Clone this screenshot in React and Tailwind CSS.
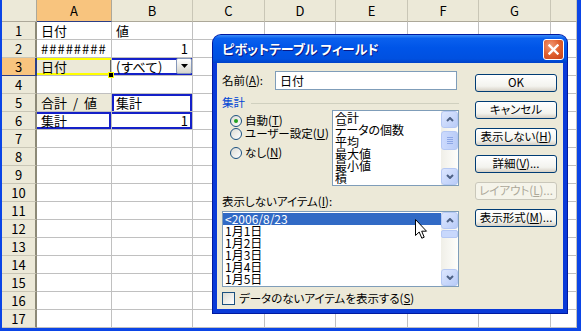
import React from 'react';

const cols = ['A', 'B', 'C', 'D', 'E', 'F', 'G', 'H'];
const rows = Array.from({ length: 17 }, (_, i) => i + 1);

// special cells of the pivot table
const cells = {
  A1: { text: '日付' },
  B1: { text: '値' },
  A2: { text: '########', cls: 'tracking-[1px]' },
  B2: { text: '1', right: true },
  A3: {
    text: '日付',
    cls: 'bg-[#ECE9D8] shadow-[inset_0_2px_0_#ffff00,inset_0_-2px_0_#ffff00,inset_-1px_0_0_#6b6b5e] z-10',
    handle: true,
  },
  B3: { text: '(すべて)', cls: 'shadow-[inset_0_2px_0_#1420c8,inset_0_-2px_0_#1420c8] pr-0', dropdown: true },
  A5: { text: '合計 / 値', cls: 'bg-[#ECE9D8] [word-spacing:3px]' },
  B5: { text: '集計', cls: 'shadow-[inset_2px_2px_0_#1420c8,inset_-2px_0_0_#1420c8]' },
  A6: { text: '集計', cls: 'shadow-[inset_0_2px_0_#1420c8,inset_0_-2px_0_#1420c8,inset_-2px_0_0_#1420c8]' },
  B6: { text: '1', right: true, cls: 'shadow-[inset_0_2px_0_#1420c8,inset_0_-2px_0_#1420c8,inset_-2px_0_0_#1420c8]' },
};

function Cell({ id }) {
  const c = cells[id] || {};
  return (
    <div
      className={`relative flex items-center px-[4px] border-r border-b border-[#C0C0C0] whitespace-nowrap ${
        c.right ? 'justify-end' : ''
      } ${c.cls || ''}`}
    >
      <span>{c.text}</span>
      {c.dropdown && (
        <div className="ml-auto mb-[1px] w-[16px] h-[16px] rounded-[2px] border border-[#8597BA] bg-[linear-gradient(to_bottom,#ffffff,#D6D5CC)] flex items-center justify-center">
          <svg width="7" height="4" viewBox="0 0 7 4">
            <path d="M0 0h7L3.5 4z" fill="#000" />
          </svg>
        </div>
      )}
      {c.handle && (
        <div className="absolute right-[-3px] bottom-[-3px] w-[6px] h-[6px] bg-black border border-[#ffff00]" />
      )}
    </div>
  );
}

function Sheet() {
  return (
    <div className="grid grid-cols-[35px_75px_81px_72px_71px_72px_71px_72px_26px] grid-rows-[22px_repeat(17,18px)] text-[13px] text-black leading-none">
      <div className="bg-[#ECE9D8] border-r border-b border-[#ACA899]" />
      {cols.map((c) => (
        <div
          key={c}
          className={`flex items-center justify-center border-r border-b ${
            c === 'A'
              ? 'bg-[#F8C47E] border-r-[#ACA899] border-b-[#2A3E86]'
              : 'bg-[#ECE9D8] border-r-[#C9C6B6] border-b-[#ACA899]'
          }`}
        >
          {c === 'H' ? '' : c}
        </div>
      ))}
      {rows.map((r) => (
        <React.Fragment key={r}>
          <div
            className={`flex items-center justify-center border-b border-r-2 ${
              r === 3 ? 'bg-[#F8C47E] border-b-[#2A3E86] border-r-[#2A3E86]' : 'bg-[#ECE9D8] border-b-[#C9C6B6] border-r-[#8C8977]'
            }`}
          >
            {r}
          </div>
          {cols.map((c) => (
            <Cell key={c + r} id={c + r} />
          ))}
        </React.Fragment>
      ))}
    </div>
  );
}

function Btn({ children, disabled }) {
  return (
    <div
      className={`w-[82px] h-[18px] rounded-[3px] border flex items-center justify-center whitespace-nowrap ${
        disabled
          ? 'border-[#C9C7BA] text-[#ACA899] bg-[#F5F4EA]'
          : 'border-[#003C74] text-black bg-[linear-gradient(to_bottom,#FFFFFF,#F3F3EE_70%,#D6D0C5)]'
      }`}
    >
      {children}
    </div>
  );
}

function Radio({ checked, children }) {
  return (
    <div className="flex items-center h-[13px] gap-[3px] whitespace-nowrap">
      <div className="w-[12px] h-[12px] shrink-0 rounded-full border border-[#1C5180] bg-[linear-gradient(135deg,#DCDBD3,#FFFFFF)] flex items-center justify-center">
        {checked && <div className="w-[4px] h-[4px] rounded-full bg-[#21A121]" />}
      </div>
      <span>{children}</span>
    </div>
  );
}

function SBtn({ up }) {
  return (
    <div className="w-[17px] h-[17px] shrink-0 rounded-[3px] border border-[#B5C8F4] bg-[linear-gradient(135deg,#DCE6FE,#B9CCF8)] flex items-center justify-center">
      <svg width="8" height="5" viewBox="0 0 8 5">
        <path d={up ? 'M1 4L4 1L7 4' : 'M1 1L4 4L7 1'} fill="none" stroke="#4D6185" strokeWidth="2" />
      </svg>
    </div>
  );
}

function ScrollBar({ small }) {
  return (
    <div className="w-[17px] h-full shrink-0 flex flex-col bg-[linear-gradient(to_right,#F0EFE8,#FEFEFB)]">
      <SBtn up />
      {small ? (
        <div className="mt-[1px] h-[8px] rounded-[2px] border border-[#B5C8F4] bg-[#C8D8FC]" />
      ) : (
        <div className="mt-[3px] h-[19px] rounded-[3px] border border-[#B5C8F4] bg-[linear-gradient(to_right,#CCDAFD,#BACDF8)] flex flex-col items-center justify-center gap-[1px]">
          <div className="w-[6px] h-px bg-[#8DA7E6]" />
          <div className="w-[6px] h-px bg-[#8DA7E6]" />
          <div className="w-[6px] h-px bg-[#8DA7E6]" />
          <div className="w-[6px] h-px bg-[#8DA7E6]" />
        </div>
      )}
      <div className="flex-1" />
      <SBtn />
    </div>
  );
}

function Dialog() {
  const aggs = ['合計', 'データの個数', '平均', '最大値', '最小値', '積'];
  const items = ['<2006/8/23', '1月1日', '1月2日', '1月3日', '1月4日', '1月5日'];
  return (
    <div className="absolute left-[211px] top-[35px] w-[354px] h-[278px] flex flex-col rounded-t-[8px] bg-[#0A3AD8] shadow-[0_0_0_1px_#0019A0] [font-feature-settings:'palt']">
      <div className="h-[28px] shrink-0 flex items-center justify-between pl-[9px] pr-[3px] rounded-t-[8px] bg-[linear-gradient(to_bottom,#3C8EF6,#0A60EE_12%,#0055E8_45%,#0050E0_85%,#0042C8)]">
        <span className="text-white font-bold text-[13px] [text-shadow:1px_1px_0_#0A1883]">ピボットテーブル フィールド</span>
        <div className="w-[21px] h-[21px] rounded-[3px] border border-white bg-[radial-gradient(circle_at_35%_30%,#F09A78,#E0602F_50%,#C5401A)] flex items-center justify-center">
          <svg width="11" height="11" viewBox="0 0 11 11">
            <path d="M1.5 1.5L9.5 9.5M9.5 1.5L1.5 9.5" stroke="#fff" strokeWidth="2.4" strokeLinecap="square" />
          </svg>
        </div>
      </div>
      <div className="flex-1 mx-[4px] mb-[4px] bg-[#ECE9D8] flex pl-[5px] text-[11.5px] leading-none text-black">
        <div className="w-[237px] shrink-0 flex flex-col">
          <div className="mt-[8px] flex items-center h-[19px]">
            <span className="w-[53px]">
              名前(<span className="underline">A</span>):
            </span>
            <div className="w-[182px] h-[19px] border border-[#7F9DB9] bg-white flex items-center px-[4px] text-[12px]">日付</div>
          </div>
          <div className="mt-[6px] h-[14px] flex items-center">
            <span className="text-[#0046D5]">集計</span>
            <div className="flex-1 h-px bg-[#D0D0BF] ml-[6px]" />
          </div>
          <div className="flex h-[76px]">
            <div className="w-[110px] pl-[8px] pt-[4px] flex flex-col">
              <Radio checked>
                自動(<span className="underline">T</span>)
              </Radio>
              <Radio>
                ユーザー設定(<span className="underline">U</span>)
              </Radio>
              <div className="mt-[6px]">
                <Radio>
                  なし(<span className="underline">N</span>)
                </Radio>
              </div>
            </div>
            <div className="w-[127px] h-[76px] border border-[#7F9DB9] bg-white flex">
              <div className="flex-1 pt-[1px] pl-[2px] flex flex-col text-[12px]">
                {aggs.map((a) => (
                  <div key={a} className="h-[12px] leading-[12px] whitespace-nowrap">
                    {a}
                  </div>
                ))}
              </div>
              <ScrollBar />
            </div>
          </div>
          <div className="mt-[9px] h-[14px] flex items-center whitespace-nowrap">
            表示しないアイテム(<span className="underline">I</span>):
          </div>
          <div className="mt-[2px] w-[237px] h-[76px] border border-[#7F9DB9] bg-white flex">
            <div className="flex-1 pt-[1px] flex flex-col text-[12px]">
              {items.map((a, i) => (
                <div
                  key={a}
                  className={`h-[12px] leading-[12px] pl-[2px] whitespace-nowrap ${i === 0 ? 'bg-[#316AC5] text-white' : ''}`}
                >
                  {a}
                </div>
              ))}
            </div>
            <ScrollBar small />
          </div>
          <div className="mt-[5px] h-[13px] flex items-center gap-[4px] whitespace-nowrap">
            <div className="w-[13px] h-[13px] shrink-0 border border-[#1C5180] bg-[linear-gradient(135deg,#DCDBD3,#FFFFFF)]" />
            <span>
              データのないアイテムを表示する(<span className="underline">S</span>)
            </span>
          </div>
        </div>
        <div className="ml-[16px] pt-[11px] flex flex-col gap-[9px]">
          <Btn>OK</Btn>
          <Btn>キャンセル</Btn>
          <Btn>
            表示しない(<span className="underline">H</span>)
          </Btn>
          <Btn>
            詳細(<span className="underline">V</span>)...
          </Btn>
          <Btn disabled>
            レイアウト(<span className="underline">L</span>)...
          </Btn>
          <Btn>
            表示形式(<span className="underline">M</span>)...
          </Btn>
        </div>
      </div>
    </div>
  );
}

function Cursor() {
  return (
    <svg className="absolute left-[413px] top-[219px]" width="13" height="21" viewBox="0 0 13 21">
      <path d="M0.5 0.5V16.5L4.2 13L6.8 19.2L9.2 18.2L6.7 12.2H11.5Z" fill="#fff" stroke="#000" strokeWidth="1" />
    </svg>
  );
}

export default function App() {
  return (
    <div className="relative w-[581px] h-[331px] overflow-hidden bg-white border-l-2 border-r-4 border-b-[3px] border-[#0B45E6] font-['Noto_Sans_CJK_JP',sans-serif]">
      <Sheet />
      <Dialog />
      <Cursor />
    </div>
  );
}
